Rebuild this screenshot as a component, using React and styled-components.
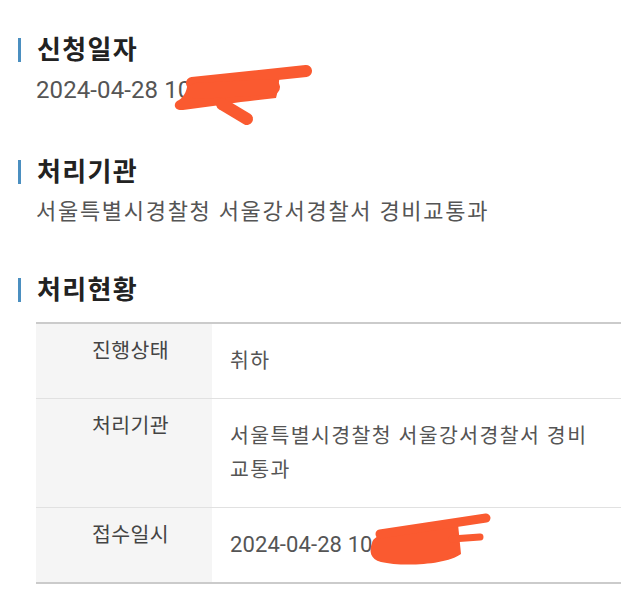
import React from "react";
import styled, { createGlobalStyle } from "styled-components";

const Global = createGlobalStyle`
  html, body { margin: 0; padding: 0; background: #ffffff; }
  body {
    font-family: Roboto, "Noto Sans CJK KR", "Noto Sans", sans-serif;
    -webkit-font-smoothing: antialiased;
  }
`;

const Page = styled.div`
  display: flex;
  flex-direction: column;
  padding: 34px 19px 0 18px;
  min-height: 616px;
  box-sizing: border-box;
`;

const Section = styled.section`
  display: flex;
  flex-direction: column;
  margin-bottom: ${(p) => p.$after || 0}px;
`;

const Heading = styled.h2`
  display: flex;
  align-items: center;
  gap: 16px;
  margin: 0;
  font-size: 26px;
  font-weight: 700;
  letter-spacing: 1.3px;
  line-height: 32px;
  color: #222222;
  &::before {
    content: "";
    width: 3px;
    height: 24px;
    background: #4b8fc0;
  }
`;

const InfoText = styled.div`
  position: relative;
  margin: 9px 0 0 18px;
  font-size: 22px;
  letter-spacing: 1.7px;
  line-height: 30px;
  color: #555555;
`;

const Digits = styled.span`
  font-family: Roboto, "Noto Sans CJK KR", sans-serif;
  font-size: ${(p) => p.$size}px;
  letter-spacing: 0.1px;
`;

const Table = styled.div`
  margin: 16px 0 0 18px;
  border-top: 2px solid #cbcbcb;
  border-bottom: 2px solid #cbcbcb;
`;

const Row = styled.div`
  display: grid;
  grid-template-columns: 176px 1fr;
  & + & {
    border-top: 1px solid #e1e1e1;
  }
`;

const Label = styled.div`
  background: #f5f5f5;
  padding: 10px 0 0 56px;
  font-size: 20.5px;
  letter-spacing: 0.4px;
  line-height: 34px;
  color: #444444;
`;

const Value = styled.div`
  position: relative;
  padding: 20px 20px 20px 18px;
  font-size: 20.5px;
  letter-spacing: 1.4px;
  line-height: 34px;
  color: #555555;
`;

const ValueLine = styled.div`
  position: relative;
`;

const Scribble = styled.svg`
  position: absolute;
  left: ${(p) => p.$left}px;
  top: ${(p) => p.$top}px;
  overflow: visible;
  pointer-events: none;
`;

const ORANGE = "#fa5a30";

const ScribbleOne = () => (
  <Scribble $left={132} $top={-13} width="148" height="64" viewBox="168 62 148 64">
    <path
      d="M188 81 C220 77 250 74 280 73 L278 90 L276 98 C258 100 240 102 228 104 L183 110 C174 111 172 103 179 100 C185 96 187 90 188 81 Z"
      fill={ORANGE}
    />
    <g fill="none" stroke={ORANGE} strokeLinecap="round" strokeLinejoin="round">
      <path d="M192 83 L306 71" strokeWidth="12" />
      <path d="M196 91 L272 87" strokeWidth="16" />
      <path d="M222 104 L247 119" strokeWidth="12" />
    </g>
  </Scribble>
);

const ScribbleTwo = () => (
  <Scribble $left={135} $top={-18} width="130" height="60" viewBox="365 505 130 60">
    <path
      d="M372 538 C374 528 396 526 420 523 L458 519 L461 549 C446 560 402 562 381 557 C370 554 369 546 372 538 Z"
      fill={ORANGE}
    />
    <g fill="none" stroke={ORANGE} strokeLinecap="round" strokeLinejoin="round">
      <path d="M380 529 L486 513" strokeWidth="9" />
      <path d="M452 534 L480 532" strokeWidth="7" />
    </g>
  </Scribble>
);

const rows = [
  { label: "진행상태", value: "취하" },
  { label: "처리기관", value: "서울특별시경찰청 서울강서경찰서 경비교통과" },
];

export default function App() {
  return (
    <>
      <Global />
      <Page>
        <Section $after={50}>
          <Heading>신청일자</Heading>
          <InfoText>
            <Digits $size={24}>2024-04-28 10</Digits>
            <ScribbleOne />
          </InfoText>
        </Section>
        <Section $after={47}>
          <Heading>처리기관</Heading>
          <InfoText>서울특별시경찰청 서울강서경찰서 경비교통과</InfoText>
        </Section>
        <Section>
          <Heading>처리현황</Heading>
          <Table>
            {rows.map((r) => (
              <Row key={r.label}>
                <Label>{r.label}</Label>
                <Value>{r.value}</Value>
              </Row>
            ))}
            <Row>
              <Label>접수일시</Label>
              <Value>
                <ValueLine>
                  <Digits $size={22}>2024-04-28 10</Digits>
                  <ScribbleTwo />
                </ValueLine>
              </Value>
            </Row>
          </Table>
        </Section>
      </Page>
    </>
  );
}
